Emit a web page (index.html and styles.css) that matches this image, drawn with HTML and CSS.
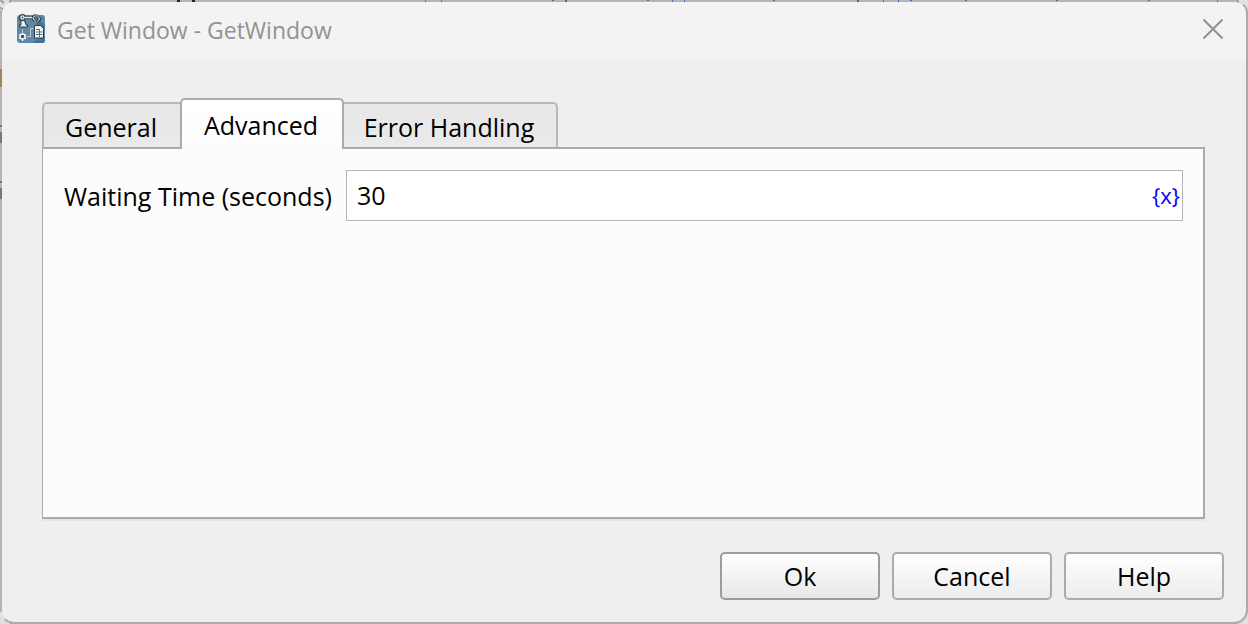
FILE: index.html
```html
<!DOCTYPE html>
<html lang="en">
<head>
<meta charset="utf-8">
<title>Get Window - GetWindow</title>
<link rel="stylesheet" href="styles.css">
</head>
<body>
<svg class="backdrop" aria-hidden="true">
  <path fill="#b0b6b5" d="M541 0h618v2H541z"/>
  <path fill="#222" d="M177 0h3v2h-3zM192 0h3v2h-3z"/>
  <path fill="#777" d="M425 0h1v2h-1zM441 0h1v2h-1zM1217 0h1v2h-1zM10 621h1v3h-1z"/>
  <path fill="#4a62b8" d="M552 0h2v1h-2zM565 0h2v2h-2zM647 0h2v1h-2zM672 0h1v2h-1zM684 0h1v2h-1zM773 0h2v1h-2zM857 0h2v2h-2zM883 0h1v2h-1zM898 0h1v2h-1zM910 0h2v1h-2zM965 0h2v1h-2zM1056 0h2v1h-2zM1148 0h2v1h-2z"/>
  <path fill="#a18361" d="M0 69h2v18H0z"/>
  <path fill="#777" d="M0 125h2v2H0zM0 132h2v11H0zM0 181h2v2H0zM0 188h2v11H0z"/>
  <path fill="#e0e0e0" d="M0 0h10v10H0zM1238 0h10v10h-10zM0 612h10v12H0zM1238 612h10v12h-10z"/>
  <path fill="none" stroke="#777" d="M0 1h3v3M0 8h2q2 2 0 5M10 0v3M1238 0v4"/>
</svg>
<main class="dialog">
  <header class="titlebar">
    <svg class="app-icon" viewBox="0 0 28 28" aria-hidden="true">
      <rect width="28" height="28" rx="3" fill="#5f88a8"/>
      <path fill="#466f90" d="M15 28l8-5 5-1v3q0 3-3 3zM20 3l8 7v4l-9-5z"/>
      <g fill="none" stroke="#2b3a45" stroke-width="3.2">
        <circle cx="5.500" cy="2.500" r="2"/>
        <path d="M8 2.500h8M18 5.500l-2-2 1.500-2.500h3M21.500 2l1 2-2 2.500"/>
      </g>
      <path fill="#f4f4ef" stroke="#2b3a45" d="M4 5.500h3.500l1.500 4.500h1.500v2h-8v-2H4z"/>
      <g fill="none" stroke="#f4f4ef" stroke-width="1.400">
        <circle cx="5.500" cy="2.500" r="1.600"/>
        <path d="M8 2.500h7"/>
        <path stroke="#c9d3d9" stroke-width="1.200" d="M18 5.500l-2-2 1.500-2.500h3M21.500 2l1 2-2 2.500"/>
      </g>
      <path fill="none" stroke="#b9cbd7" d="M5.500 14v3M10 21.500h3.500v-8h3"/>
      <circle cx="5.500" cy="21.500" r="2.500" fill="#35506a" stroke="#f4f4ef" stroke-width="1.500"/>
      <path stroke="#f4f4ef" stroke-width="1.300" d="M5.500 17.500v2M5.500 24v2M2 19.500l1.500 1M2 23.500l1.500-1M9 19.500l-1.500 1M9 23.500l-1.500-1"/>
      <path fill="#f4f4ef" stroke="#2b3a45" d="M17.500 10.500h6l3 3v9.500h-9z"/>
      <path stroke="#5b7386" fill="none" d="M19 14.500h3M19 17h6.500M19 19.500h6.500M22.500 14v8"/>
    </svg>
    <h1 class="title">Get Window - GetWindow</h1>
    <button class="close" type="button" aria-label="Close">
      <svg viewBox="0 0 20 20" aria-hidden="true"><path d="M0.500 0.500l19 19M19.500 0.500l-19 19"/></svg>
    </button>
  </header>
  <section class="content">
    <div class="tabs" role="tablist">
      <button class="tab" type="button" role="tab" aria-selected="false">General</button>
      <button class="tab tab-active" type="button" role="tab" aria-selected="true" aria-controls="advanced">Advanced</button>
      <button class="tab tab-last" type="button" role="tab" aria-selected="false">Error Handling</button>
    </div>
    <div class="panel" id="advanced" role="tabpanel">
      <div class="row">
        <label class="label" for="wait">Waiting Time (seconds)</label>
        <div class="field">
          <input class="input" id="wait" type="text" value="30">
          <button class="variable" type="button" aria-label="Insert variable">{x}</button>
        </div>
      </div>
    </div>
  </section>
  <footer class="actions">
    <button class="action action-default" type="button">Ok</button>
    <button class="action" type="button">Cancel</button>
    <button class="action" type="button">Help</button>
  </footer>
</main>
</body>
</html>
```

FILE: styles.css
```css
* { box-sizing: border-box; }

body {
  margin: 0;
  min-height: 100vh;
  display: flex;
  background: #b5b5b5;
  color: #000;
  font: 25px/32px "Open Sans", "Noto Sans", sans-serif;
}

button, input { font: inherit; color: inherit; }

.backdrop {
  position: absolute;
  inset: 0;
  width: 100%;
  height: 100%;
  z-index: -1;
}

.dialog {
  flex: 1;
  display: flex;
  flex-direction: column;
  border: 2px solid #ababab;
  border-top-color: transparent;
  border-left-color: transparent;
  border-radius: 14px;
  background: #efefef;
  background-clip: padding-box;
  overflow: hidden;
}

.titlebar {
  display: flex;
  align-items: center;
  height: 56px;
  padding: 0 23px 2px 15px;
  background: #f3f3f3;
}

.app-icon { width: 28px; height: 28px; margin-right: 12px; overflow: visible; }

.title {
  flex: 1;
  margin: 0;
  padding-top: 2px;
  color: #929292;
  font-size: 23px;
  font-weight: 400;
}

.close {
  display: flex;
  padding: 0;
  border: 0;
  background: none;
}

.close svg {
  width: 20px;
  height: 20px;
  fill: none;
  stroke: #919191;
  stroke-width: 2;
}

.content {
  flex: 1;
  display: flex;
  flex-direction: column;
  padding: 40px 41px 0 40px;
}

.tabs { display: flex; align-items: flex-end; }

.tab {
  width: 138px;
  height: 47px;
  padding: 0 2px 0 0;
  border: 2px solid #b8b8b8;
  border-right: 0;
  border-bottom: 0;
  border-radius: 5px 0 0;
  background: linear-gradient(#e7e7e7, #eaeaea);
}

.tab-active {
  position: relative;
  z-index: 1;
  width: 164px;
  height: 51px;
  border-right: 2px solid #ababab;
  border-color: #ababab;
  border-radius: 5px 5px 0 0;
  background: linear-gradient(#fff, #fcfcfc);
}

.tab-last {
  width: 214px;
  border-right: 2px solid #b8b8b8;
  border-left: 0;
  border-radius: 0 5px 0 0;
}

.panel {
  flex: 1;
  margin-top: -2px;
  padding: 21px 20px;
  border: 2px solid #ababab;
  border-left-width: 1px;
  background: #fcfcfc;
  box-shadow: 0 2px #e5e5e5;
}

.row { display: flex; align-items: center; gap: 14px; padding-left: 1px; }

.field {
  flex: 1;
  display: flex;
  align-items: center;
  height: 51px;
  padding: 0 2px 2px 0;
  border: 1px solid #b5b5b5;
  background: #fff;
}

.input {
  flex: 1;
  min-width: 0;
  padding: 0 10px;
  border: 0;
  outline: 0;
  background: none;
}

.variable {
  padding: 0;
  border: 0;
  background: none;
  color: #00f;
  font-size: 22px;
}

.actions {
  display: flex;
  justify-content: flex-end;
  gap: 12px;
  padding: 33px 22px 22px;
}

.action {
  width: 160px;
  height: 48px;
  padding: 0;
  border: 2px solid #ababab;
  border-radius: 5px;
  background: linear-gradient(#fff, #ececec);
}

.action-default {
  border-color: #9c9c9c;
  background: linear-gradient(#fff, #e8e8e8);
}
```
